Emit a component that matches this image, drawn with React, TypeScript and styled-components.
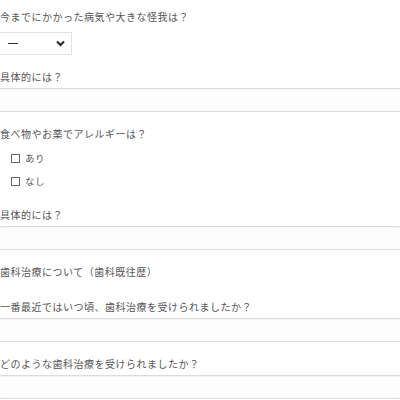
import React from "react";
import styled, { createGlobalStyle } from "styled-components";

const Global = createGlobalStyle`
  html, body { margin: 0; padding: 0; background: #fff; }
  body { font-family: "Noto Sans CJK JP", "Noto Sans", sans-serif; color: #555; }
`;

const Form = styled.div`
  display: flex;
  flex-direction: column;
  padding-top: 8px;
`;

const Label = styled.div<{ $mt?: number }>`
  font-size: 10px;
  line-height: 18px;
  letter-spacing: 0.5px;
  color: #555;
  margin-top: ${(p) => p.$mt ?? 0}px;
`;

const Select = styled.div`
  margin-top: 6px;
  width: 72px;
  height: 23px;
  box-sizing: border-box;
  border: 1px solid #e2e2e2;
  border-left: none;
  background: #fff;
  display: flex;
  align-items: center;
  justify-content: space-between;
  padding: 0 6px 0 8px;
`;

const Dash = styled.span`
  display: block;
  width: 10px;
  height: 1px;
  background: #333;
`;

const Input = styled.div`
  margin-top: 2px;
  height: 24px;
  box-sizing: border-box;
  border-top: 1px solid #dcdcdc;
  border-bottom: 1px solid #dcdcdc;
  background: #fdfdfd;
  box-shadow: inset 0 1px 1px rgba(0, 0, 0, 0.04);
`;

const Check = styled.div<{ $mt?: number }>`
  display: flex;
  align-items: center;
  gap: 5px;
  margin-left: 11px;
  margin-top: ${(p) => p.$mt ?? 0}px;
  font-size: 9.5px;
  line-height: 14px;
  letter-spacing: 0.5px;
  color: #555;
`;

const Box = styled.span`
  width: 9px;
  height: 9px;
  border: 1px solid #666;
  box-sizing: border-box;
  display: inline-block;
`;

export default function App() {
  return (
    <>
      <Global />
      <Form>
        <Label>今までにかかった病気や大きな怪我は？</Label>
        <Select>
          <Dash />
          <svg width="9" height="7" viewBox="0 0 9 7">
            <path d="M1 1.5 L4.5 5 L8 1.5" stroke="#222" strokeWidth="2" fill="none" />
          </svg>
        </Select>
        <Label $mt={13}>具体的には？</Label>
        <Input />
        <Label $mt={13}>食べ物やお薬でアレルギーは？</Label>
        <Check $mt={8}><Box />あり</Check>
        <Check $mt={9}><Box />なし</Check>
        <Label $mt={18}>具体的には？</Label>
        <Input />
        <Label $mt={13}>歯科治療について（歯科既往歴）</Label>
        <Label $mt={17}>一番最近ではいつ頃、歯科治療を受けられましたか？</Label>
        <Input />
        <Label $mt={13}>どのような歯科治療を受けられましたか？</Label>
        <Input />
      </Form>
    </>
  );
}
